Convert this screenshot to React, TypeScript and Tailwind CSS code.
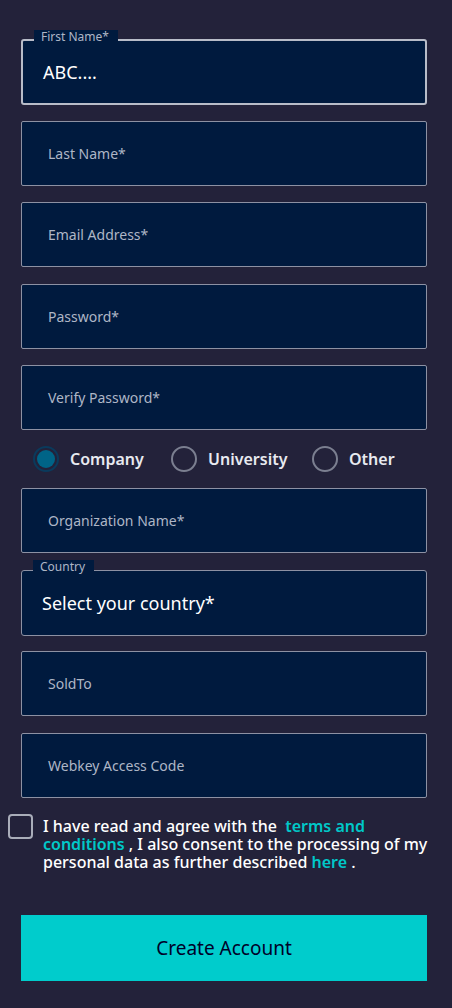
import React from "react";

const font = { fontFamily: '"Noto Sans", "Open Sans", sans-serif' };

function Field({ placeholder, className = "" }: { placeholder: string; className?: string }) {
  return (
    <div
      className={
        "h-[65px] w-full rounded-[2px] border border-[#8d91a3] bg-[#001a3e] flex items-center pl-[26px] " + className
      }
    >
      <span className="text-[14px] text-[#aeb6c6]">{placeholder}</span>
    </div>
  );
}

function LabeledField({ label, value, focused }: { label: string; value: string; focused?: boolean }) {
  return (
    <div
      className={
        "relative h-[66px] w-full rounded-[3px] bg-[#001a3e] flex items-center pl-[20px] " +
        (focused ? "border-2 border-[#b8bcc8]" : "border border-[#8d91a3]")
      }
    >
      <span className="absolute left-[11px] top-[-11px] bg-[#001a3e] pl-[7px] pr-[9px] text-[12px] leading-[14px] text-[#aeb6c6]">
        {label}
      </span>
      <span className="text-[18px] text-white">{value}</span>
    </div>
  );
}

function Radio({ label, checked }: { label: string; checked?: boolean }) {
  return (
    <div className="flex items-center gap-[11px]">
      {checked ? (
        <span className="h-[26px] w-[26px] rounded-full border-[2px] border-[#0a3a5c] flex items-center justify-center">
          <span className="h-[18px] w-[18px] rounded-full bg-[#006487]" />
        </span>
      ) : (
        <span className="h-[26px] w-[26px] rounded-full border-[2px] border-[#7b7f90]" />
      )}
      <span className="text-[16px] font-semibold text-[#e8eaf0]">{label}</span>
    </div>
  );
}

export default function App() {
  return (
    <div className="min-h-[1008px] w-[452px] bg-[#23223a]" style={font}>
      <div className="px-[21px] pt-[39px] w-[448px]">
        <LabeledField label="First Name*" value="ABC...." focused />
        <Field placeholder="Last Name*" className="mt-[16px]" />
        <Field placeholder="Email Address*" className="mt-[16px]" />
        <Field placeholder="Password*" className="mt-[17px]" />
        <Field placeholder="Verify Password*" className="mt-[16px]" />
        <div className="flex items-center h-[58px] pl-[12px]">
          <div className="w-[138px]"><Radio label="Company" checked /></div>
          <div className="w-[141px]"><Radio label="University" /></div>
          <Radio label="Other" />
        </div>
        <Field placeholder="Organization Name*" />
        <div className="mt-[17px]">
          <LabeledField label="Country" value="Select your country*" />
        </div>
        <Field placeholder="SoldTo" className="mt-[15px]" />
        <Field placeholder="Webkey Access Code" className="mt-[17px]" />
      </div>
      <div className="flex items-start pl-[8px] pr-[8px] mt-[19px]">
        <span className="-mt-[3px] h-[25px] w-[25px] shrink-0 rounded-[4px] border-2 border-[#a9adb9]" />
        <p className="ml-[10px] text-[16px] font-medium leading-[18px] text-white">
          I have read and agree with the{" "}
          <span className="font-semibold text-[#00c8c8]">&nbsp;terms and conditions</span> , I also consent to the
          processing of my personal data as further described{" "}
          <span className="font-semibold text-[#00c8c8]">here</span> .
        </p>
      </div>
      <div className="px-[21px] mt-[44px] w-[448px]">
        <button className="h-[66px] w-full bg-[#00cccc] text-[19px] text-[#000028]">Create Account</button>
      </div>
    </div>
  );
}
